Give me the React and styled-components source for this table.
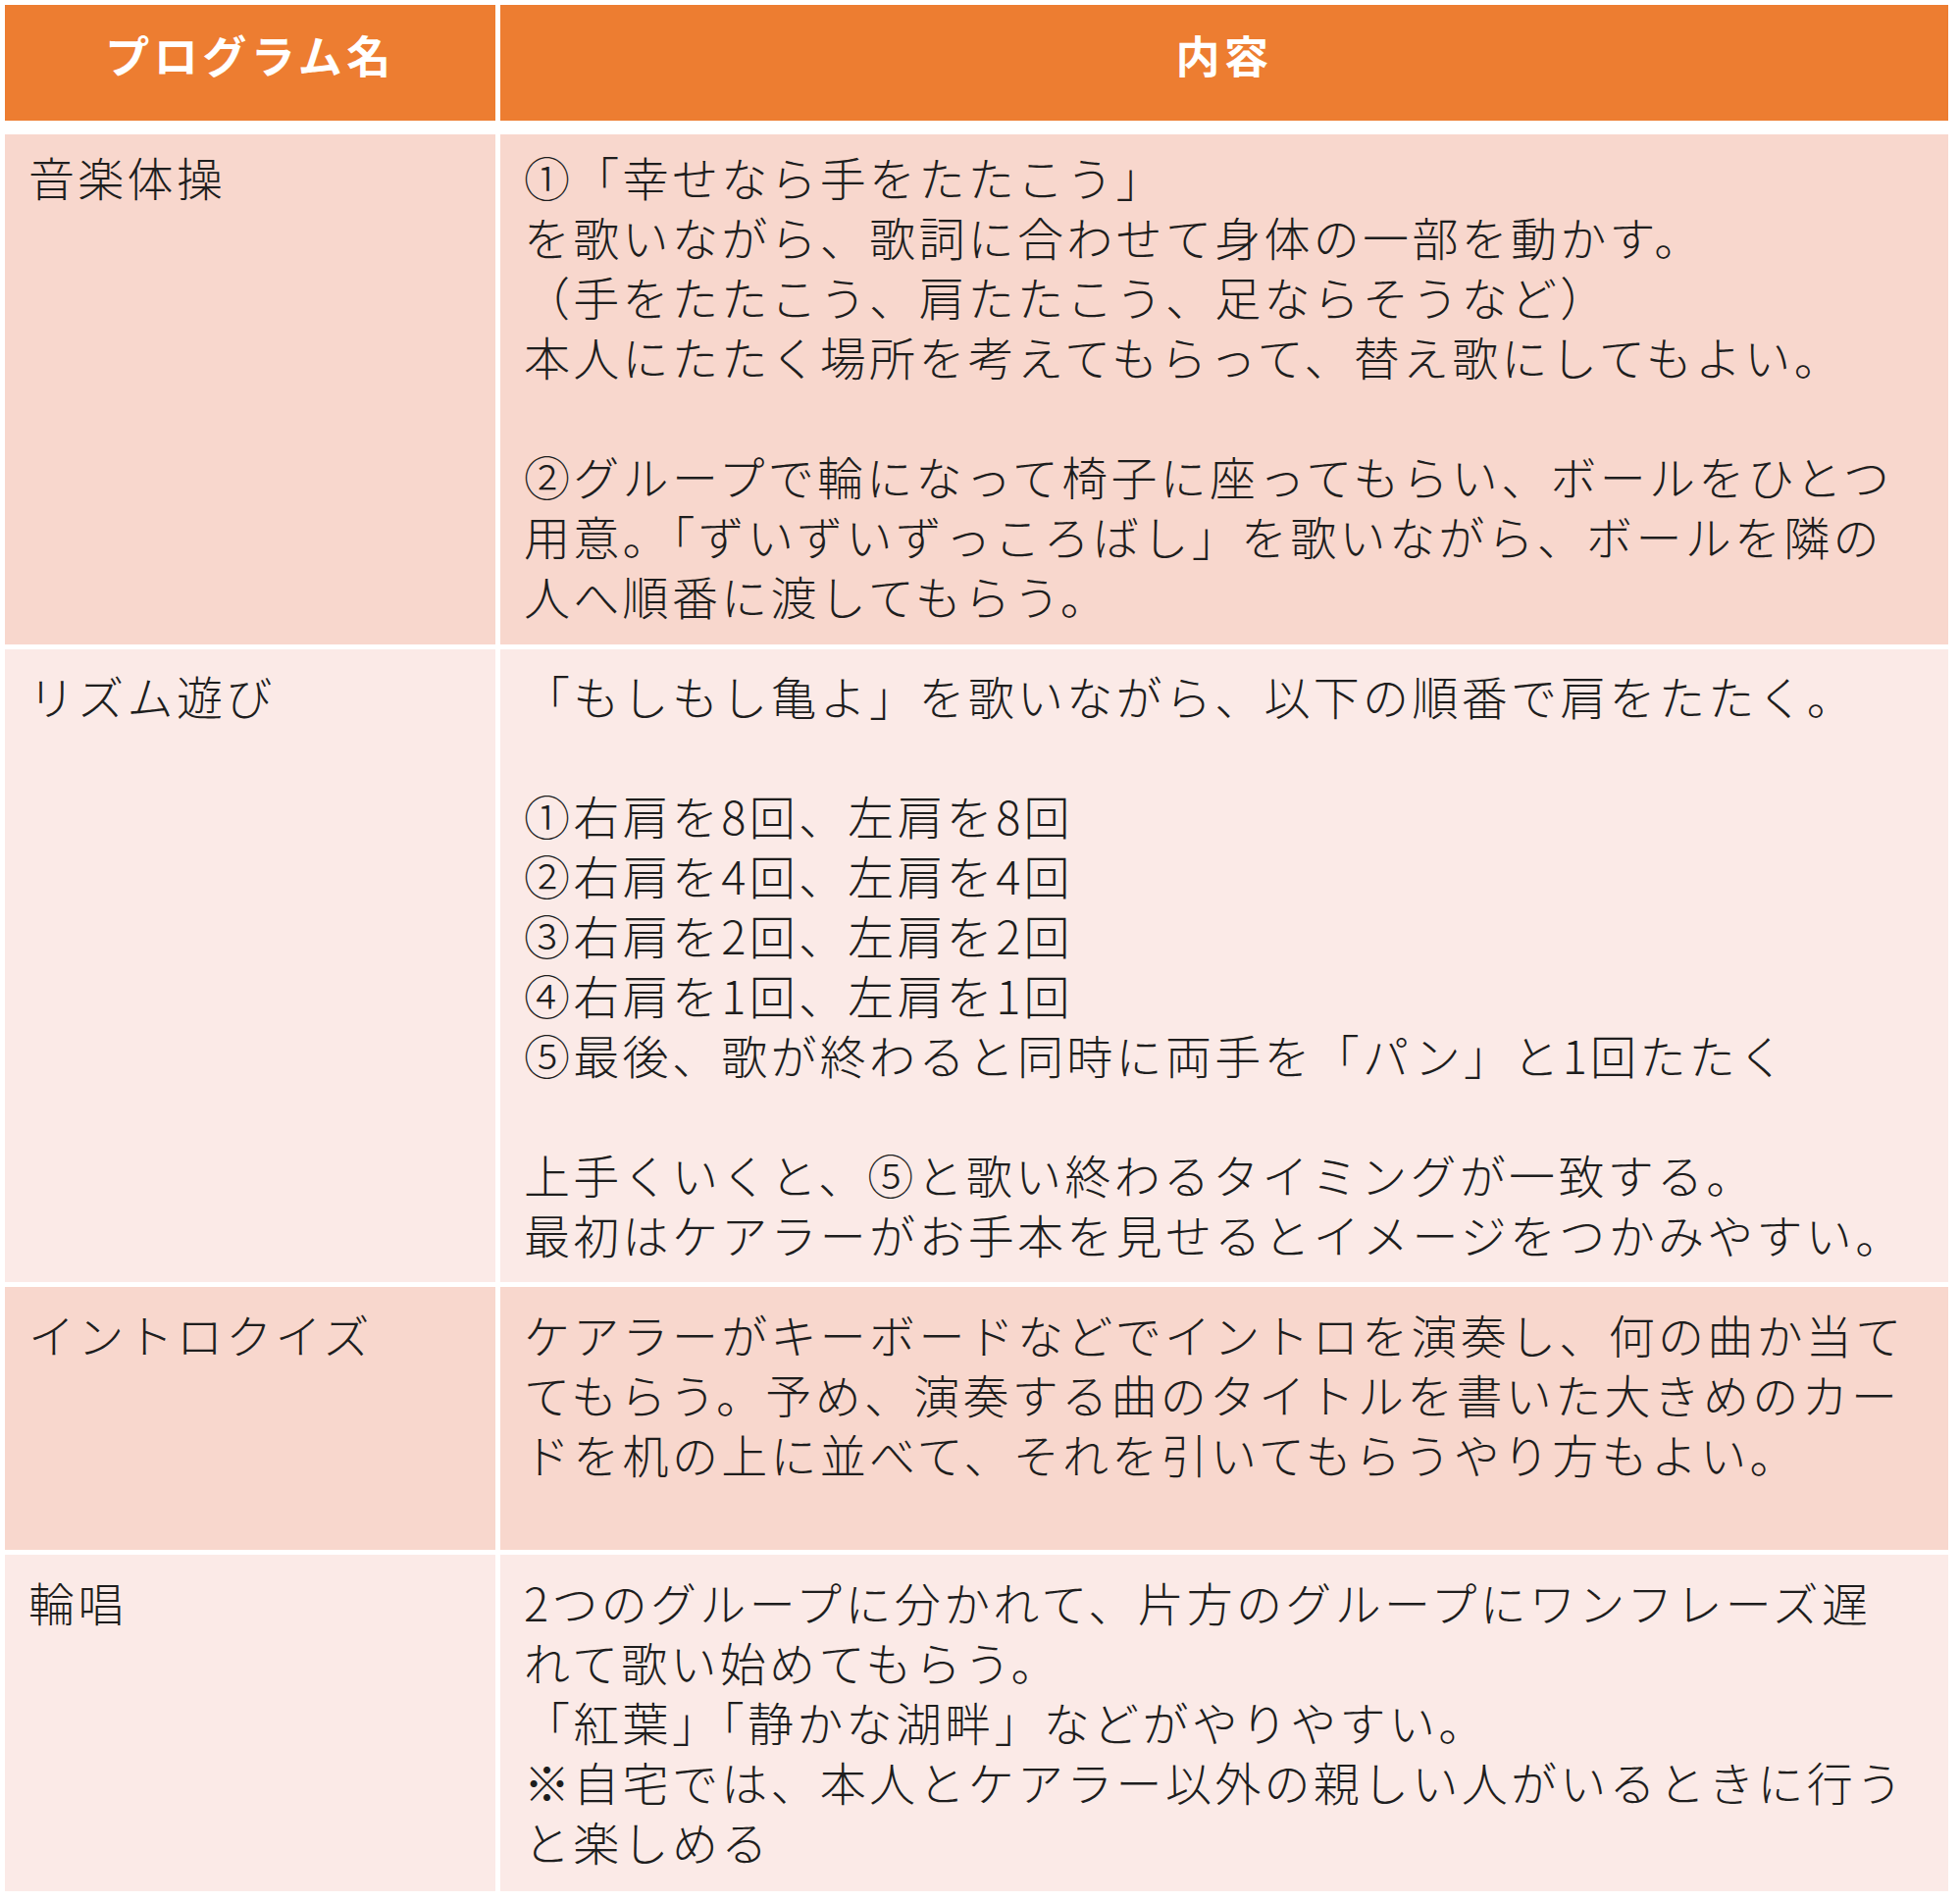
import styled, { createGlobalStyle } from "styled-components";

const GlobalStyle = createGlobalStyle`
  body {
    margin: 0;
    background: #ffffff;
  }
`;

const Page = styled.div`
  width: 1998px;
  height: 1938px;
  padding: 5px;
  box-sizing: border-box;
  background: #ffffff;
  font-family: "Noto Sans CJK JP Light", "Noto Sans CJK JP", "Noto Sans", sans-serif;
  font-weight: 300;
  color: #1e1e1e;
`;

const Table = styled.div`
  width: 1981px;
  display: flex;
  flex-direction: column;
  gap: 5px;
`;

const Row = styled.div`
  display: grid;
  grid-template-columns: 500px 1fr;
  column-gap: 5px;
  height: ${(p) => p.$height}px;
  margin-bottom: ${(p) => p.$after || 0}px;
`;

const HeadCell = styled.div`
  background: #ed7d31;
  color: #ffffff;
  font-family: "Noto Sans CJK JP", sans-serif;
  font-weight: 700;
  font-size: 45px;
  letter-spacing: 4.5px;
  display: flex;
  justify-content: center;
  align-items: center;
  padding-bottom: 18px;
  box-sizing: border-box;
`;

const Cell = styled.div`
  background: ${(p) => (p.$band ? "#f8d7cd" : "#fbeae7")};
  padding: ${(p) => p.$top || 16}px 22px 0 24px;
  box-sizing: border-box;
  font-size: 47px;
  line-height: 61px;
  letter-spacing: 3.3px;
  white-space: pre;
  overflow: hidden;
`;

const rows = [
  {
    name: "音楽体操",
    band: true,
    height: 520,
    top: 12,
    text: [
      "①「幸せなら手をたたこう」",
      "を歌いながら、歌詞に合わせて身体の一部を動かす。",
      "（手をたたこう、肩たたこう、足ならそうなど）",
      "本人にたたく場所を考えてもらって、替え歌にしてもよい。",
      "",
      "②グループで輪になって椅子に座ってもらい、ボールをひとつ",
      "用意。「ずいずいずっころばし」を歌いながら、ボールを隣の",
      "人へ順番に渡してもらう。",
    ],
  },
  {
    name: "リズム遊び",
    band: false,
    height: 645,
    top: 16,
    text: [
      "「もしもし亀よ」を歌いながら、以下の順番で肩をたたく。",
      "",
      "①右肩を8回、左肩を8回",
      "②右肩を4回、左肩を4回",
      "③右肩を2回、左肩を2回",
      "④右肩を1回、左肩を1回",
      "⑤最後、歌が終わると同時に両手を「パン」と1回たたく",
      "",
      "上手くいくと、⑤と歌い終わるタイミングが一致する。",
      "最初はケアラーがお手本を見せるとイメージをつかみやすい。",
    ],
  },
  {
    name: "イントロクイズ",
    band: true,
    height: 268,
    top: 17,
    text: [
      "ケアラーがキーボードなどでイントロを演奏し、何の曲か当て",
      "てもらう。予め、演奏する曲のタイトルを書いた大きめのカー",
      "ドを机の上に並べて、それを引いてもらうやり方もよい。",
    ],
  },
  {
    name: "輪唱",
    band: false,
    height: 343,
    top: 17,
    text: [
      "2つのグループに分かれて、片方のグループにワンフレーズ遅",
      "れて歌い始めてもらう。",
      "「紅葉」「静かな湖畔」などがやりやすい。",
      "※自宅では、本人とケアラー以外の親しい人がいるときに行う",
      "と楽しめる",
    ],
  },
];

export default function App() {
  return (
    <Page>
      <GlobalStyle />
      <Table>
        <Row $height={118} $after={9}>
          <HeadCell>プログラム名</HeadCell>
          <HeadCell>内容</HeadCell>
        </Row>
        {rows.map((r) => (
          <Row key={r.name} $height={r.height}>
            <Cell $band={r.band} $top={r.top}>
              {r.name}
            </Cell>
            <Cell $band={r.band} $top={r.top}>
              {r.text.join("\n")}
            </Cell>
          </Row>
        ))}
      </Table>
    </Page>
  );
}
